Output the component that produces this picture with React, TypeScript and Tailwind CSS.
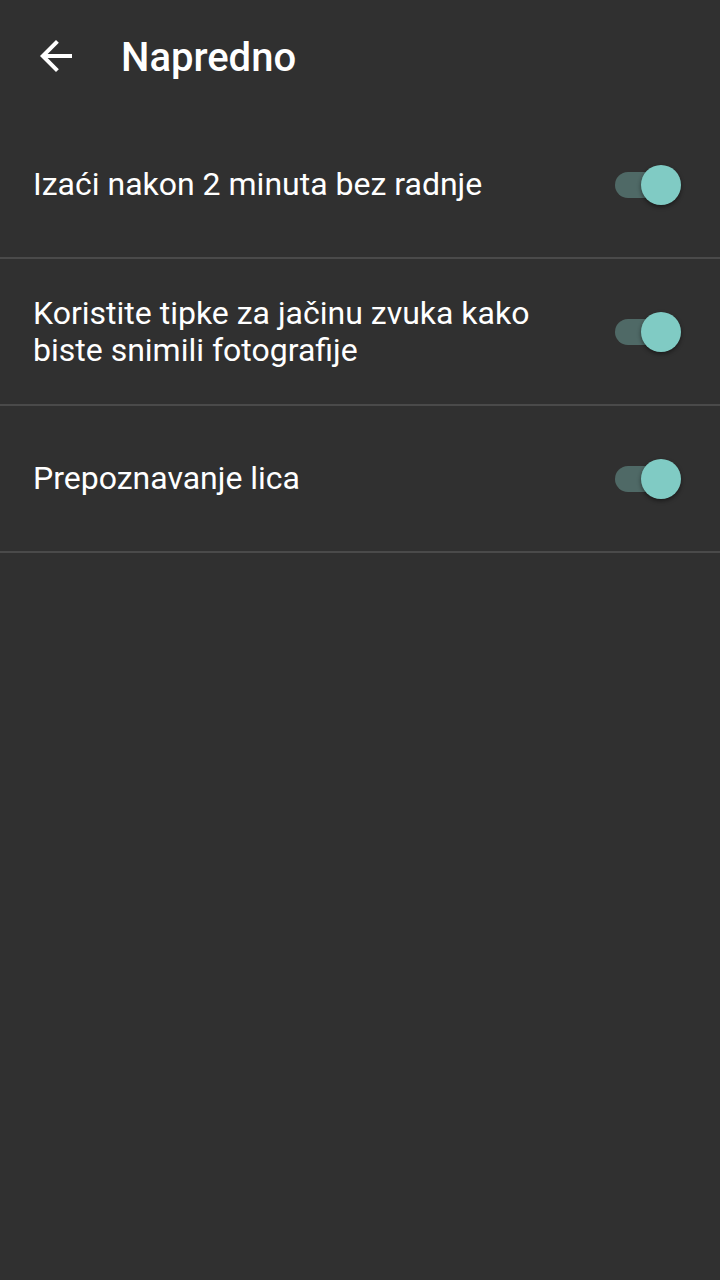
import React from "react";

type SettingRow = {
  id: string;
  label: string;
  checked: boolean;
};

const ROWS: SettingRow[] = [
  { id: "timeout", label: "Izaći nakon 2 minuta bez radnje", checked: true },
  {
    id: "volume",
    label: "Koristite tipke za jačinu zvuka kako biste snimili fotografije",
    checked: true,
  },
  { id: "face", label: "Prepoznavanje lica", checked: true },
];

function BackArrow() {
  return (
    <svg viewBox="0 0 24 24" className="w-[48px] h-[48px]" fill="#ffffff">
      <path d="M20 11H7.83l5.59-5.59L12 4l-8 8 8 8 1.41-1.41L7.83 13H20v-2z" />
    </svg>
  );
}

function Toggle({ checked }: { checked: boolean }) {
  return (
    <div className="relative w-[66px] h-[40px] shrink-0">
      <div
        className={
          checked
            ? "absolute left-0 top-[7px] w-[62px] h-[26px] rounded-full bg-[#4f6966]"
            : "absolute left-0 top-[7px] w-[62px] h-[26px] rounded-full bg-[#5a5a5a]"
        }
      />
      <div
        className={
          checked
            ? "absolute right-0 top-0 w-[40px] h-[40px] rounded-full bg-[#80cbc4] shadow-[0_2px_4px_rgba(0,0,0,0.45)]"
            : "absolute left-0 top-0 w-[40px] h-[40px] rounded-full bg-[#bdbdbd] shadow-[0_2px_4px_rgba(0,0,0,0.45)]"
        }
      />
    </div>
  );
}

export default function App() {
  return (
    <div
      className="w-[720px] min-h-[1280px] bg-[#303030] text-white"
      style={{ fontFamily: "Roboto, 'Noto Sans', sans-serif" }}
    >
      <header className="h-[112px] flex items-center">
        <button className="ml-[32px] w-[48px] h-[48px] flex items-center justify-center">
          <BackArrow />
        </button>
        <h1 className="ml-[41px] mt-[4px] text-[40px] font-medium leading-none">
          Napredno
        </h1>
      </header>

      <div className="flex flex-col">
        {ROWS.map((row) => (
          <div
            key={row.id}
            className="h-[147px] border-b-2 border-[#4a4a4a] flex items-center justify-between pl-[33px] pr-[39px]"
          >
            <p className="max-w-[530px] text-[32px] leading-[37px] text-white">
              {row.label}
            </p>
            <Toggle checked={row.checked} />
          </div>
        ))}
      </div>
    </div>
  );
}
